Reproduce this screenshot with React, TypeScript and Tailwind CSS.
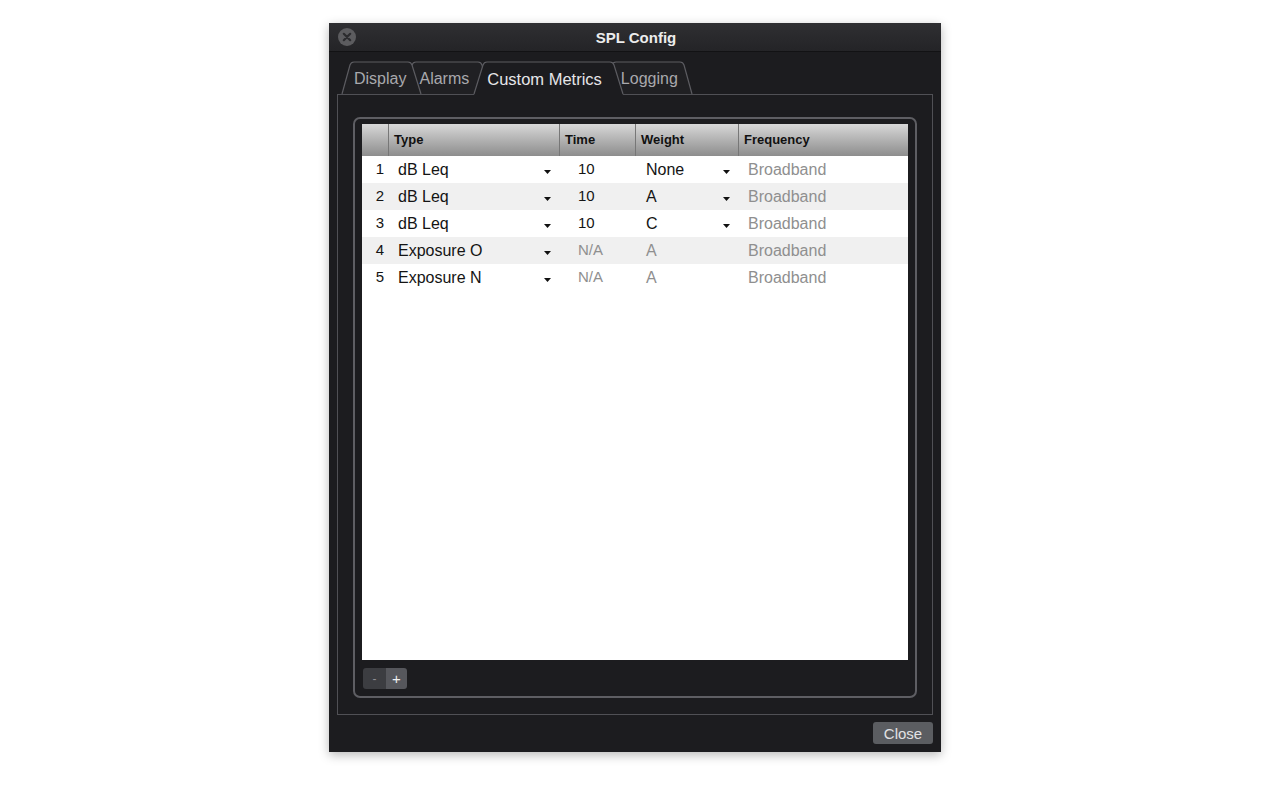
import { Fragment } from 'react';

type Metric = {
  n: number;
  type: string;
  time: string;
  weight: string;
  editable: boolean;
};

const metrics: Metric[] = [
  { n: 1, type: 'dB Leq', time: '10', weight: 'None', editable: true },
  { n: 2, type: 'dB Leq', time: '10', weight: 'A', editable: true },
  { n: 3, type: 'dB Leq', time: '10', weight: 'C', editable: true },
  { n: 4, type: 'Exposure O', time: 'N/A', weight: 'A', editable: false },
  { n: 5, type: 'Exposure N', time: 'N/A', weight: 'A', editable: false },
];

function Caret() {
  return (
    <svg width="7" height="4" viewBox="0 0 7 4" className="mt-[5px] shrink-0">
      <path d="M0 0 L7 0 L3.5 4 Z" fill="#111" />
    </svg>
  );
}

function CloseDot() {
  return (
    <svg width="18" height="18" viewBox="0 0 18 18">
      <circle cx="9" cy="9" r="9" fill="#5c5c5f" />
      <path d="M5.8 5.8 L12.2 12.2 M12.2 5.8 L5.8 12.2" stroke="#2c2c2f" strokeWidth="2.2" strokeLinecap="round" />
    </svg>
  );
}

// tab outlines, back to front; the active tab is drawn last and runs 1px over the panel edge
function TabShapes() {
  const stroke = '#5c5c61';
  return (
    <svg width="612" height="35" viewBox="0 0 612 35" className="absolute left-0 top-0 overflow-visible">
      <path d="M275 34 L283 5 Q284 2 287 2 L351 2 Q354 2 355 5 L363 34 Z" fill="#202023" />
      <path d="M275 34 L283 5 Q284 2 287 2 L351 2 Q354 2 355 5 L363 34" fill="none" stroke={stroke} strokeWidth="1.2" />
      <path d="M75 34 L83 5 Q84 2 87 2 L149 2 Q152 2 153 5 L161 34 Z" fill="#202023" />
      <path d="M75 34 L83 5 Q84 2 87 2 L149 2 Q152 2 153 5 L161 34" fill="none" stroke={stroke} strokeWidth="1.2" />
      <path d="M13 34 L21 5 Q22 2 25 2 L79 2 Q82 2 83 5 L92 34 Z" fill="#202023" />
      <path d="M13 34 L21 5 Q22 2 25 2 L79 2 Q82 2 83 5 L92 34" fill="none" stroke={stroke} strokeWidth="1.2" />
      <path d="M145 35 L154 5 Q155 2 158 2 L281 2 Q284 2 285 5 L294 35 Z" fill="#1c1c1f" />
      <path d="M145 34 L154 5 Q155 2 158 2 L281 2 Q284 2 285 5 L294 34" fill="none" stroke={stroke} strokeWidth="1.2" />
    </svg>
  );
}

export default function App() {
  return (
    <div className="w-full h-[785px] bg-white flex justify-center pt-[23px] font-['Liberation_Sans',Arial,sans-serif]">
      <div className="w-[612px] h-[729px] flex flex-col bg-[#1c1c1f] shadow-[0_3px_10px_rgba(0,0,0,0.28)]">
        {/* title bar */}
        <div className="h-[29px] shrink-0 grid grid-cols-[1fr_auto_1fr] items-center px-[9px] bg-linear-to-b from-[#2f2f32] to-[#242427] border-b border-[#121214]">
          <div className="flex items-center">
            <CloseDot />
          </div>
          <div className="text-[15px] font-bold text-[#ececec] leading-none pl-[2px]">SPL Config</div>
          <div />
        </div>

        {/* tabs */}
        <div className="relative z-10 h-[34px] mt-[8px] shrink-0 flex items-start pt-[9px] text-[16px] leading-[20px]">
          <TabShapes />
          <span className="relative ml-[25px] text-[#a9a9ad]">Display</span>
          <span className="relative ml-[13px] text-[#a9a9ad]">Alarms</span>
          <span className="relative ml-[18px] text-[16.5px] text-[#e6e6e8]">Custom Metrics</span>
          <span className="relative ml-[19px] text-[#a9a9ad]">Logging</span>
        </div>

        {/* tab panel */}
        <div className="mx-[8px] h-[621px] shrink-0 border border-[#505055] px-[15px] pt-[22px]">
          <div className="h-[581px] rounded-[7px] border-2 border-[#5e5e63] px-[7px] pt-[5px]">
            <div className="h-[536px] bg-white">
              <div className="grid grid-cols-[26px_171px_76px_103px_1fr] h-[32px] bg-linear-to-b from-[#d8d8d8] to-[#8d8d8d] text-[13px] font-bold text-[#111] items-stretch">
                <div />
                <div className="border-l border-[#777] pl-[5px] flex items-center">Type</div>
                <div className="border-l border-[#777] pl-[5px] flex items-center">Time</div>
                <div className="border-l border-[#777] pl-[5px] flex items-center">Weight</div>
                <div className="border-l border-[#777] pl-[5px] flex items-center">Frequency</div>
              </div>
              <div className="grid grid-cols-[26px_171px_76px_103px_1fr] auto-rows-[27px] text-[16px] text-[#141414]">
                {metrics.map((m) => {
                  const bg = m.n % 2 === 0 ? 'bg-[#f0f0f0]' : 'bg-white';
                  return (
                    <Fragment key={m.n}>
                      <div className={`${bg} flex items-center justify-end pr-[4px] text-[15px]`}>{m.n}</div>
                      <div className={`${bg} flex items-center justify-between pl-[10px] pr-[8px]`}>
                        <span>{m.type}</span>
                        <Caret />
                      </div>
                      <div className={`${bg} flex items-center pl-[19px] text-[15px] ${m.editable ? '' : 'text-[#8f8f8f]'}`}>{m.time}</div>
                      <div className={`${bg} flex items-center justify-between pl-[11px] pr-[8px] ${m.editable ? '' : 'text-[#8f8f8f]'}`}>
                        <span>{m.weight}</span>
                        {m.editable && <Caret />}
                      </div>
                      <div className={`${bg} flex items-center pl-[10px] text-[#8f8f8f]`}>Broadband</div>
                    </Fragment>
                  );
                })}
              </div>
            </div>
            <div className="mt-[8px] ml-[1px] flex h-[21px] w-[44px] rounded-[3px] overflow-hidden">
              <button className="w-[23px] bg-[#3c3d41] text-[#8e8e92] text-[12px] flex items-center justify-center leading-none">-</button>
              <button className="w-[21px] bg-[#56575c] text-[#f0f0f0] text-[15px] flex items-center justify-center leading-none">+</button>
            </div>
          </div>
        </div>

        {/* footer */}
        <div className="flex justify-end pr-[8px] pt-[7px]">
          <button className="w-[60px] h-[22px] rounded-[3px] bg-[#5b5d61] text-[#e2e2e4] text-[15px] leading-none flex items-center justify-center">
            Close
          </button>
        </div>
      </div>
    </div>
  );
}
